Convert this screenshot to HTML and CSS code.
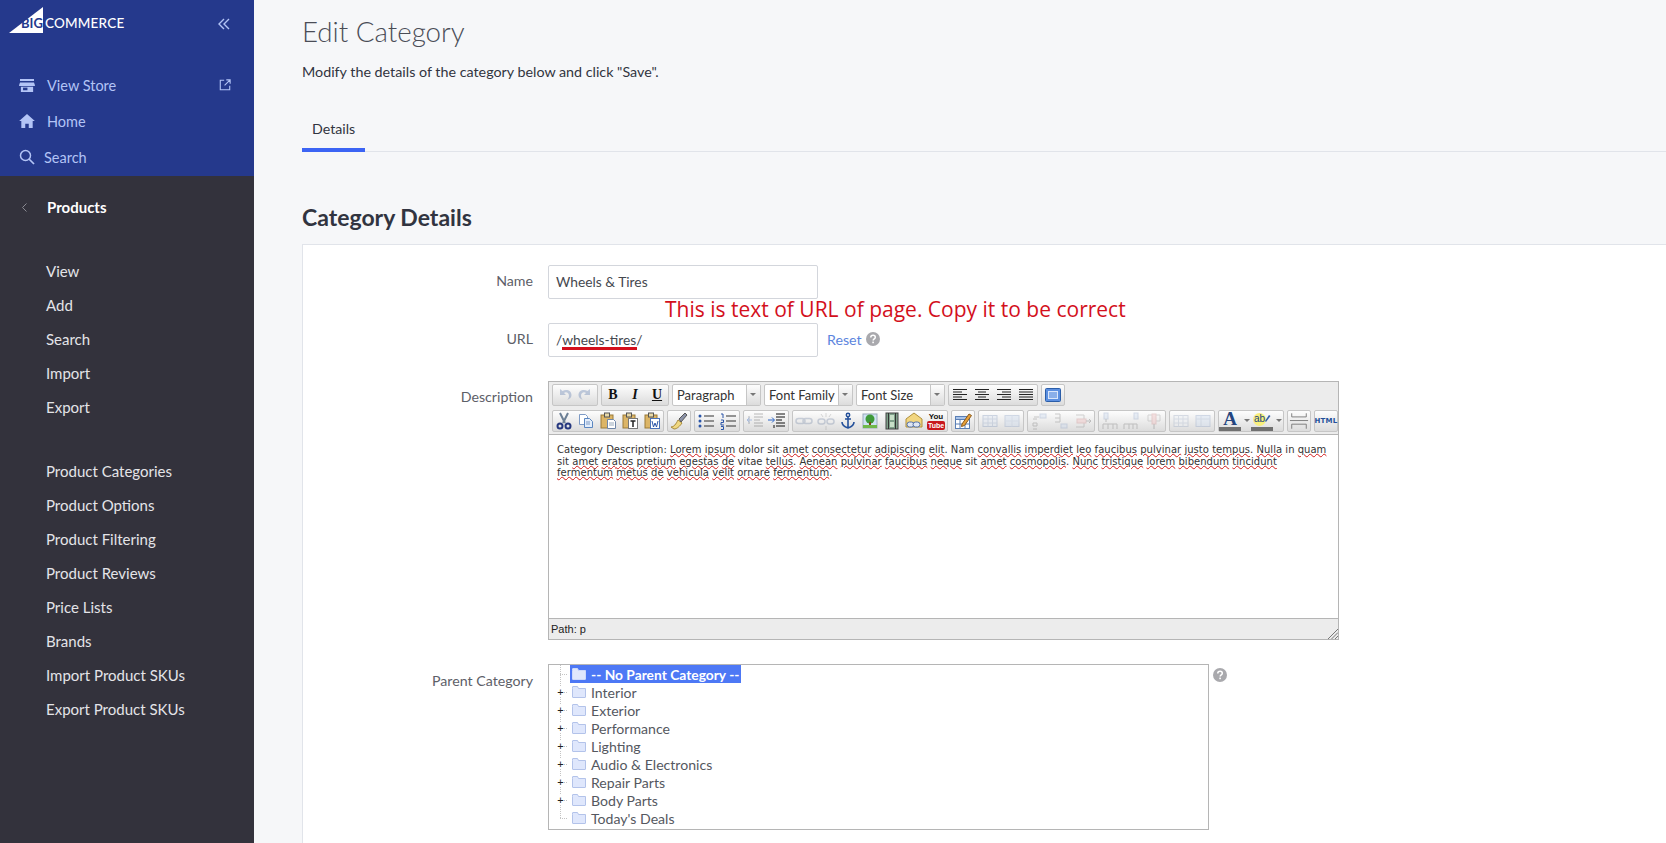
FILE: index.html
```html
<!DOCTYPE html>
<html lang="en">
  <head>
    <meta charset="UTF-8" />
    <title>Edit Category</title>
    <link rel="stylesheet" href="styles.css">
  </head>
  <body>
    <svg class="defs" width="0" height="0">
      <symbol id="help" viewBox="0 0 14 14"><circle cx="7" cy="7" r="7" fill="#a9a9ad"/><path d="M4.8 5.4c0-1.300 1-2.100 2.300-2.100s2.200.8 2.200 1.900c0 1.700-2.100 1.600-2.100 3.300" fill="none" stroke="#fff" stroke-width="1.500"/><rect x="6.300" y="9.600" width="1.600" height="1.600" fill="#fff"/></symbol>
      <symbol id="folder" viewBox="0 0 14 12"><path d="M.5 2.500v8.500a.5.500 0 0 0 .5.500h12a.5.500 0 0 0 .5-.500V2.500h-7l-1-2H1a.5.500 0 0 0-.5.500z" fill="#dfe7fc" stroke="#b3c3ea"/></symbol>
      <symbol id="folder-on" viewBox="0 0 14 12"><path d="M.5 2.500v8.500a.5.500 0 0 0 .5.500h12a.5.500 0 0 0 .5-.500V2.500h-7l-1-2H1a.5.500 0 0 0-.5.500z" fill="#dfe7fc" stroke="#cdd9fa"/></symbol>
      <symbol id="undo" viewBox="0 0 20 20"><path d="M6 4v6h6l-2-2c2-1.500 5-.5 5 3 0 1.500-.8 3-2 4 3-1 4.500-3 4.500-5 0-4.500-5-6.500-9-4z" fill="#5a78ad"/></symbol>
      <symbol id="redo" viewBox="0 0 20 20"><path d="M14 4v6H8l2-2c-2-1.500-5-.5-5 3 0 1.500.8 3 2 4-3-1-4.500-3-4.500-5 0-4.500 5-6.500 9-4z" fill="#5a78ad"/></symbol>
      <symbol id="justl" viewBox="0 0 20 20"><path d="M3 4.500h14M3 7h9M3 9.500h14M3 12h9M3 14.500h14" stroke="#222" fill="none"/></symbol>
      <symbol id="justc" viewBox="0 0 20 20"><path d="M3 4.500h14M6 7h8M3 9.500h14M6 12h8M3 14.500h14" stroke="#222" fill="none"/></symbol>
      <symbol id="justr" viewBox="0 0 20 20"><path d="M3 4.500h14M8 7h9M3 9.500h14M8 12h9M3 14.500h14" stroke="#222" fill="none"/></symbol>
      <symbol id="justf" viewBox="0 0 20 20"><path d="M3 4.500h14M3 7h14M3 9.500h14M3 12h14M3 14.500h14" stroke="#222" fill="none"/></symbol>
      <symbol id="full" viewBox="0 0 20 20"><rect x="2.500" y="3.500" width="15" height="13" rx="1" fill="#5b8fe0" stroke="#2a5da8"/><rect x="5" y="6" width="10" height="8" fill="#d9e6fb"/><path d="M6 8h8M6 10h8M6 12h8" stroke="#3b78d8"/></symbol>
      <symbol id="cut" viewBox="0 0 20 20"><path d="M6 2l5 10M14 2l-5 10" stroke="#6c7f95" stroke-width="2" fill="none"/><circle cx="6" cy="15" r="2.500" fill="none" stroke="#26387f" stroke-width="2"/><circle cx="14" cy="15" r="2.500" fill="none" stroke="#26387f" stroke-width="2"/></symbol>
      <symbol id="copy" viewBox="0 0 20 20"><path d="M3.500 3.500h6l2 2v8h-8z" fill="#fff" stroke="#7d9ac5"/><path d="M8.500 7.500h5l3 3v6h-8z" fill="#e4eefb" stroke="#5b86c0"/><path d="M10 11h4M10 13h4" stroke="#7d9ac5"/></symbol>
      <symbol id="paste" viewBox="0 0 20 20"><rect x="3" y="4" width="12" height="13" fill="#dcb566" stroke="#9a7a38"/><rect x="6.500" y="2" width="5" height="4" fill="#e8d9a8" stroke="#555"/><path d="M9.500 8.500h6l2 2v7h-8z" fill="#fff" stroke="#6e86a8"/><path d="M11 12h5M11 14h5" stroke="#9ab"/></symbol>
      <symbol id="pastet" viewBox="0 0 20 20"><rect x="3" y="4" width="12" height="13" fill="#dcb566" stroke="#9a7a38"/><rect x="6.500" y="2" width="5" height="4" fill="#e8d9a8" stroke="#555"/><rect x="8.500" y="7.500" width="9" height="10" fill="#fff" stroke="#777"/><path d="M10.500 10h5M13 10v6" stroke="#222" stroke-width="1.500"/></symbol>
      <symbol id="pastew" viewBox="0 0 20 20"><rect x="3" y="4" width="12" height="13" fill="#dcb566" stroke="#9a7a38"/><rect x="6.500" y="2" width="5" height="4" fill="#e8d9a8" stroke="#555"/><rect x="8.500" y="7.500" width="9" height="10" fill="#fff" stroke="#4a72b8"/><path d="M10 10l1.500 6 1.500-4 1.500 4 1.500-6" stroke="#2a55a8" fill="none"/></symbol>
      <symbol id="clean" viewBox="0 0 20 20"><path d="M2 16c3 0 5-3 7-7l4 3c-2 3-5 6-8 6z" fill="#f0d880" stroke="#a88a3a"/><path d="M10 8l6-6 2 2-6 7z" fill="#8c93a8" stroke="#555"/></symbol>
      <symbol id="bull" viewBox="0 0 20 20"><circle cx="4" cy="5" r="1.500" fill="#2a55a8"/><circle cx="4" cy="10" r="1.500" fill="#2a55a8"/><circle cx="4" cy="15" r="1.500" fill="#2a55a8"/><path d="M8 5h10M8 10h10M8 15h10" stroke="#333" fill="none"/></symbol>
      <symbol id="numl" viewBox="0 0 20 20"><path d="M3 3h2v4M3 9h2.500v2.500H3V14h3M3 15.500h2.500v3H3" stroke="#2a55a8" fill="none"/><path d="M8 5h10M8 10h10M8 15h10" stroke="#333" fill="none"/></symbol>
      <symbol id="outd" viewBox="0 0 20 20"><path d="M9 3h9M9 6h9M9 9h6M9 12h9M9 15h9M4 5v8" stroke="#444" fill="none"/><path d="M7 9H2M4.500 6.500L2 9l2.500 2.500" stroke="#2a65c8" fill="none"/></symbol>
      <symbol id="ind" viewBox="0 0 20 20"><path d="M9 3h9M9 6h9M9 9h6M9 12h9M9 15h9M7 17v-3" stroke="#111" fill="none"/><path d="M1 9h6M5 6.500L7.500 9 5 11.500" stroke="#2a65c8" fill="none"/></symbol>
      <symbol id="link" viewBox="0 0 20 20"><rect x="2" y="7.500" width="9" height="5" rx="2.500" fill="none" stroke="#7a8ba8" stroke-width="1.500"/><rect x="9" y="7.500" width="9" height="5" rx="2.500" fill="none" stroke="#7a8ba8" stroke-width="1.500"/></symbol>
      <symbol id="unlink" viewBox="0 0 20 20"><rect x="2" y="8" width="7" height="5" rx="2.500" fill="none" stroke="#7a8ba8" stroke-width="1.500"/><rect x="11" y="8" width="7" height="5" rx="2.500" fill="none" stroke="#7a8ba8" stroke-width="1.500"/><path d="M10 2v4M10 15v4M5 3l2 3M15 3l-2 3" stroke="#999" fill="none"/></symbol>
      <symbol id="anchor" viewBox="0 0 20 20"><circle cx="10" cy="4" r="1.700" fill="none" stroke="#24509a" stroke-width="1.500"/><path d="M10 6v11M7 8h6M4 11c0 3 3 5 6 6 3-1 6-3 6-6" fill="none" stroke="#24509a" stroke-width="1.600"/></symbol>
      <symbol id="image" viewBox="0 0 20 20"><rect x="3" y="3" width="14" height="14" fill="#cfe3f3" stroke="#9ab"/><circle cx="10" cy="8" r="4.500" fill="#3f9a3a"/><rect x="9" y="11" width="2" height="4" fill="#7a4a1c"/><path d="M3 14h14v3H3z" fill="#6fb84a"/></symbol>
      <symbol id="media" viewBox="0 0 20 20"><rect x="4" y="2" width="12" height="16" fill="#7fa08a" stroke="#444"/><path d="M6.500 2v16M13.500 2v16" stroke="#333" stroke-width="1"/><rect x="8" y="4" width="4" height="5" fill="#c8e0c8"/><rect x="8" y="11" width="4" height="5" fill="#c8e0c8"/></symbol>
      <symbol id="embed" viewBox="0 0 20 20"><path d="M2 8l8-6 8 6v8H2z" fill="#f2d680" stroke="#b08f3a"/><rect x="3" y="11" width="7" height="5" rx="2.500" fill="#dfe6f2" stroke="#5270a8"/><rect x="9" y="11" width="7" height="5" rx="2.500" fill="#dfe6f2" stroke="#5270a8"/></symbol>
      <symbol id="tabled" viewBox="0 0 20 20"><rect x="2.500" y="5.500" width="14" height="12" fill="#fff" stroke="#5a7fb5"/><rect x="2.500" y="5.500" width="14" height="3" fill="#a9c3e8" stroke="#5a7fb5"/><path d="M7 8.500v9M12 8.500v9M2.500 13h14" stroke="#5a7fb5"/><path d="M9 13L16 3l2.500 1.500-7 10-3 1z" fill="#e8a13a" stroke="#8a5a1c"/></symbol>
      <symbol id="row" viewBox="0 0 20 20"><rect x="3" y="4.500" width="14" height="11" fill="#dbe5f4" stroke="#7f96bc"/><path d="M3 8h14M3 12h14M8 4.500v11M12.500 4.500v11" stroke="#93a7c8"/></symbol>
      <symbol id="cell" viewBox="0 0 20 20"><rect x="3" y="4.500" width="14" height="11" fill="#c9d9f0" stroke="#8ba1c6"/><path d="M3 10h14M10 4.500v11" stroke="#a9bbd8"/></symbol>
      <symbol id="rowb" viewBox="0 0 20 20"><path d="M8 12h-4v3h4zM4 8h4M4 18h4" fill="none" stroke="#777"/><rect x="11" y="3" width="6" height="4" fill="#c9d9f0" stroke="#8ba1c6"/><path d="M5 6h5" stroke="#777"/></symbol>
      <symbol id="rowa" viewBox="0 0 20 20"><path d="M4 3h5v4H4M9 7v4H4" fill="none" stroke="#777"/><rect x="10" y="13" width="6" height="4" fill="#c9d9f0" stroke="#8ba1c6"/></symbol>
      <symbol id="rowd" viewBox="0 0 20 20"><path d="M3 4h8v12H3" fill="none" stroke="#888"/><rect x="4" y="8" width="9" height="4" fill="#f0b8b8" stroke="#c88"/><path d="M13 10h5M16 8l2 2-2 2" stroke="#666" fill="none"/></symbol>
      <symbol id="colb" viewBox="0 0 20 20"><path d="M3 18v-5h14v5M8 13v5M13 13v5" fill="none" stroke="#777"/><rect x="4" y="2" width="4" height="6" fill="#c9d9f0" stroke="#8ba1c6"/><path d="M6 8v3" stroke="#666"/></symbol>
      <symbol id="cola" viewBox="0 0 20 20"><path d="M2 18v-5h13v5M7 13v5M11 13v5" fill="none" stroke="#777"/><rect x="12" y="2" width="4" height="6" fill="#c9d9f0" stroke="#8ba1c6"/></symbol>
      <symbol id="cold" viewBox="0 0 20 20"><path d="M4 4h12v6H4z" fill="none" stroke="#999"/><rect x="8" y="3" width="4" height="10" fill="#f0b8b8" stroke="#c88"/><path d="M10 13v5" stroke="#666"/></symbol>
      <symbol id="split" viewBox="0 0 20 20"><rect x="3" y="4.500" width="14" height="11" fill="#eef2f8" stroke="#9aa9c2"/><path d="M3 8h14M3 12h14M7.500 4.500v11M12 4.500v11" stroke="#aab8cf"/></symbol>
      <symbol id="merge" viewBox="0 0 20 20"><rect x="3" y="4.500" width="14" height="11" fill="#cfdff5" stroke="#8ba1c6"/><path d="M3 8h14M8 4.500v11" stroke="#a0b4d2"/></symbol>
      <symbol id="hr" viewBox="0 0 22 22"><path d="M3 2.500v4h16v-4M3 19.500v-5h16v5M1 10.500h20" fill="none" stroke="#777"/></symbol>
      <symbol id="store" viewBox="0 0 18 16"><path d="M1 1h16v2.500H1zM1 5h16l1 3v1H0V8zM2 10h14v6H2z" fill="#b3c4f6"/><rect x="4.500" y="11" width="5" height="3" fill="#25398c"/></symbol>
      <symbol id="ext" viewBox="0 0 14 14"><path d="M6 1.500H1.500v11h11V8M8.500 1h4.500v4.500M13 1L6.500 7.500" fill="none" stroke="#b3c4f6" stroke-width="1.300"/></symbol>
      <symbol id="home" viewBox="0 0 18 16"><path d="M9 0L0 8h2.500v8h4.500v-5h4v5h4.500V8H18z" fill="#b3c4f6"/></symbol>
    </svg>

    <div class="page">
      <aside class="sidebar">
        <div class="sidebar-top">
          <div class="logo-row">
            <div class="logo">
              <svg class="logo-mark" width="34" height="26" viewBox="0 0 34 26"><path d="M0 26L34 0v26z" fill="#fff"/></svg>
              <span class="logo-big">BIG</span>
              <span class="logo-rest">COMMERCE</span>
            </div>
            <svg class="collapse" width="12" height="12" viewBox="0 0 12 12"><path d="M6 1L1 6l5 5M11 1L6 6l5 5" fill="none" stroke="#b3c4f6" stroke-width="1.400"/></svg>
          </div>
          <a class="top-link">
            <svg class="top-icon" width="16" height="14"><use href="#store"/></svg>
            <span>View Store</span>
            <svg class="top-ext" width="12" height="12"><use href="#ext"/></svg>
          </a>
          <a class="top-link">
            <svg class="top-icon" width="16" height="14"><use href="#home"/></svg>
            <span>Home</span>
          </a>
          <a class="top-link top-link-search">
            <svg class="search-icon" width="16" height="16" viewBox="0 0 16 16"><circle cx="6.500" cy="6.500" r="5" fill="none" stroke="#b3c4f6" stroke-width="1.500"/><path d="M10 10l5 5" stroke="#b3c4f6" stroke-width="1.700"/></svg>
            <span>Search</span>
          </a>
        </div>
        <div class="section-title">
          <svg width="5" height="9" viewBox="0 0 5 9"><path d="M4.500.5L.5 4.500l4 4" fill="none" stroke="#8a8a92"/></svg>
          <span>Products</span>
        </div>
        <nav class="side-list">
          <a>View</a>
          <a>Add</a>
          <a>Search</a>
          <a>Import</a>
          <a>Export</a>
        </nav>
        <nav class="side-list">
          <a>Product Categories</a>
          <a>Product Options</a>
          <a>Product Filtering</a>
          <a>Product Reviews</a>
          <a>Price Lists</a>
          <a>Brands</a>
          <a>Import Product SKUs</a>
          <a>Export Product SKUs</a>
        </nav>
      </aside>

      <main class="content">
        <h1>Edit Category</h1>
        <p class="intro">Modify the details of the category below and click "Save".</p>
        <div class="tabs"><a class="tab">Details</a></div>
        <h2>Category Details</h2>

        <section class="panel">
          <div class="form-row">
            <label>Name</label>
            <div class="field"><div class="input">Wheels &amp; Tires</div></div>
          </div>

          <div class="form-row">
            <label>URL</label>
            <div class="field">
              <div class="input">/wheels-tires/</div>
              <span class="note">This is text of URL of page. Copy it to be correct</span>
              <span class="note-line"></span>
              <a class="reset">Reset</a>
              <svg class="help help-url" width="14" height="14"><use href="#help"/></svg>
            </div>
          </div>

          <div class="form-row">
            <label class="label-tall">Description</label>
            <div class="editor">
              <div class="toolbar">
                <div class="tool-row">
                  <div class="group off">
                    <span class="btn"><svg><use href="#undo"/></svg></span>
                    <span class="btn"><svg><use href="#redo"/></svg></span>
                  </div>
                  <div class="group">
                    <span class="btn btn-b">B</span>
                    <span class="btn btn-i">I</span>
                    <span class="btn btn-u">U</span>
                  </div>
                  <div class="select"><span>Paragraph</span><i></i></div>
                  <div class="select"><span>Font Family</span><i></i></div>
                  <div class="select"><span>Font Size</span><i></i></div>
                  <div class="group">
                    <span class="btn"><svg><use href="#justl"/></svg></span>
                    <span class="btn"><svg><use href="#justc"/></svg></span>
                    <span class="btn"><svg><use href="#justr"/></svg></span>
                    <span class="btn"><svg><use href="#justf"/></svg></span>
                  </div>
                  <div class="group">
                    <span class="btn"><svg><use href="#full"/></svg></span>
                  </div>
                </div>
                <div class="tool-row">
                  <div class="group">
                    <span class="btn"><svg><use href="#cut"/></svg></span>
                    <span class="btn"><svg><use href="#copy"/></svg></span>
                    <span class="btn"><svg><use href="#paste"/></svg></span>
                    <span class="btn"><svg><use href="#pastet"/></svg></span>
                    <span class="btn"><svg><use href="#pastew"/></svg></span>
                  </div>
                  <div class="group">
                    <span class="btn"><svg><use href="#clean"/></svg></span>
                  </div>
                  <div class="group">
                    <span class="btn"><svg><use href="#bull"/></svg></span>
                    <span class="btn"><svg><use href="#numl"/></svg></span>
                  </div>
                  <div class="group">
                    <span class="btn off"><svg><use href="#outd"/></svg></span>
                    <span class="btn"><svg><use href="#ind"/></svg></span>
                  </div>
                  <div class="group">
                    <span class="btn off"><svg><use href="#link"/></svg></span>
                    <span class="btn off"><svg><use href="#unlink"/></svg></span>
                    <span class="btn"><svg><use href="#anchor"/></svg></span>
                    <span class="btn"><svg><use href="#image"/></svg></span>
                    <span class="btn"><svg><use href="#media"/></svg></span>
                    <span class="btn"><svg><use href="#embed"/></svg></span>
                    <span class="btn yt"><b>You</b><b class="yt-red">Tube</b></span>
                  </div>
                  <div class="group">
                    <span class="btn"><svg><use href="#tabled"/></svg></span>
                  </div>
                  <div class="group off">
                    <span class="btn"><svg><use href="#row"/></svg></span>
                    <span class="btn"><svg><use href="#cell"/></svg></span>
                  </div>
                  <div class="group off">
                    <span class="btn"><svg><use href="#rowb"/></svg></span>
                    <span class="btn"><svg><use href="#rowa"/></svg></span>
                    <span class="btn"><svg><use href="#rowd"/></svg></span>
                  </div>
                  <div class="group off">
                    <span class="btn"><svg><use href="#colb"/></svg></span>
                    <span class="btn"><svg><use href="#cola"/></svg></span>
                    <span class="btn"><svg><use href="#cold"/></svg></span>
                  </div>
                  <div class="group off">
                    <span class="btn"><svg><use href="#split"/></svg></span>
                    <span class="btn"><svg><use href="#merge"/></svg></span>
                  </div>
                  <div class="group">
                    <span class="btn btn-color">A</span>
                    <span class="arrow"></span>
                    <span class="btn btn-hl">
                      <span class="hl-ab">ab</span>
                      <svg viewBox="0 0 20 20"><path d="M13 10l4-6 1.500 1-4.500 6z" fill="#3460a8"/></svg>
                    </span>
                    <span class="arrow"></span>
                  </div>
                  <div class="group">
                    <span class="btn"><svg><use href="#hr"/></svg></span>
                  </div>
                  <div class="group">
                    <span class="btn btn-html">HTML</span>
                  </div>
                </div>
              </div>
              <div class="editor-body">
                Category Description: <u>Lorem</u> <u>ipsum</u> dolor sit <u>amet</u> <u>consectetur</u> <u>adipiscing</u> <u>elit</u>. Nam <u>convallis</u> <u>imperdiet</u> <u>leo</u> <u>faucibus</u> <u>pulvinar</u> <u>justo</u> <u>tempus</u>. <u>Nulla</u> in <u>quam</u> sit <u>amet</u> <u>eratos</u> <u>pretium</u> <u>egestas</u> <u>de</u> vitae <u>tellus</u>. <u>Aenean</u> <u>pulvinar</u> <u>faucibus</u> <u>neque</u> sit <u>amet</u> <u>cosmopolis</u>. <u>Nunc</u> <u>tristique</u> <u>lorem</u> <u>bibendum</u> <u>tincidunt</u> <u>fermentum</u> <u>metus</u> <u>de</u> <u>vehicula</u> <u>velit</u> <u>ornare</u> <u>fermentum</u>.
              </div>
              <div class="statusbar">
                <span>Path: p</span>
                <svg class="grip" width="10" height="10" viewBox="0 0 10 10"><path d="M10 0L0 10M10 3.500L3.500 10M10 7l-3 3" stroke="#777"/></svg>
              </div>
            </div>
          </div>

          <div class="form-row">
            <label class="label-tree">Parent Category</label>
            <div class="field field-tree">
              <ul class="tree">
                <li class="tree-item selected">
                  <i class="tree-toggle"></i>
                  <span class="tree-label"><svg width="14" height="12"><use href="#folder-on"/></svg><span>-- No Parent Category --</span></span>
                </li>
                <li class="tree-item">
                  <i class="tree-toggle">+</i>
                  <span class="tree-label"><svg width="14" height="12"><use href="#folder"/></svg><span>Interior</span></span>
                </li>
                <li class="tree-item">
                  <i class="tree-toggle">+</i>
                  <span class="tree-label"><svg width="14" height="12"><use href="#folder"/></svg><span>Exterior</span></span>
                </li>
                <li class="tree-item">
                  <i class="tree-toggle">+</i>
                  <span class="tree-label"><svg width="14" height="12"><use href="#folder"/></svg><span>Performance</span></span>
                </li>
                <li class="tree-item">
                  <i class="tree-toggle">+</i>
                  <span class="tree-label"><svg width="14" height="12"><use href="#folder"/></svg><span>Lighting</span></span>
                </li>
                <li class="tree-item">
                  <i class="tree-toggle">+</i>
                  <span class="tree-label"><svg width="14" height="12"><use href="#folder"/></svg><span>Audio &amp; Electronics</span></span>
                </li>
                <li class="tree-item">
                  <i class="tree-toggle">+</i>
                  <span class="tree-label"><svg width="14" height="12"><use href="#folder"/></svg><span>Repair Parts</span></span>
                </li>
                <li class="tree-item">
                  <i class="tree-toggle">+</i>
                  <span class="tree-label"><svg width="14" height="12"><use href="#folder"/></svg><span>Body Parts</span></span>
                </li>
                <li class="tree-item last">
                  <i class="tree-toggle"></i>
                  <span class="tree-label"><svg width="14" height="12"><use href="#folder"/></svg><span>Today's Deals</span></span>
                </li>
              </ul>
              <svg class="help help-tree" width="14" height="14"><use href="#help"/></svg>
            </div>
          </div>
        </section>
      </main>
    </div>
  </body>
</html>
```

FILE: styles.css
```css
html,
body {
  height: 100%;
  overflow: hidden;
}

body {
  margin: 0;
  background-color: #f6f7f9;
  color: #313440;
  font-family: "Lato", "Open Sans", sans-serif;
  font-size: 14.2px;
}

.defs {
  position: absolute;
}

.page {
  display: flex;
  height: 843px;
}

/* sidebar */

.sidebar {
  flex: 0 0 254px;
  background-color: #33323c;
  color: #e4e4e8;
  font-size: 15px;
}

.sidebar-top {
  height: 176px;
  background-color: #25398c;
  color: #b3c4f6;
  font-size: 14.500px;
}

.logo-row {
  display: flex;
  justify-content: space-between;
  align-items: center;
  height: 48px;
  margin-bottom: 19px;
  padding: 0 24px 0 9px;
}

.logo {
  position: relative;
  display: flex;
  align-items: flex-end;
  width: 120px;
  height: 26px;
  margin-top: -8px;
}

.logo-mark {
  display: block;
}

.logo-big {
  position: absolute;
  left: 12px;
  bottom: 2px;
  color: #25398c;
  font-size: 13px;
  font-weight: 700;
  line-height: 15px;
}

.logo-rest {
  position: absolute;
  left: 36px;
  bottom: 2px;
  color: #fff;
  font-size: 13.5px;
  font-weight: 500;
  line-height: 15px;
  letter-spacing: 0.2px;
}

.top-link {
  display: flex;
  align-items: center;
  height: 36px;
  padding-left: 19px;
}

.top-icon {
  margin-right: 12px;
}

.top-ext {
  margin-left: auto;
  margin-right: 23px;
}

.search-icon {
  margin-right: 9px;
}

.section-title {
  display: flex;
  align-items: center;
  height: 62px;
  padding-left: 22px;
  color: #fff;
  font-weight: 700;
}

.section-title span {
  margin-left: 20px;
}

.side-list {
  display: flex;
  flex-direction: column;
  margin-top: 16px;
  margin-bottom: 30px;
  padding-left: 46px;
}

.side-list + .side-list {
  margin-top: 0;
}

.side-list a {
  height: 34px;
  line-height: 34px;
}

/* main column */

.content {
  flex: 1;
  min-width: 0;
  padding-left: 48px;
}

h1 {
  margin: 13px 0 0;
  font-size: 27.7px;
  font-weight: 300;
  line-height: 38px;
  color: #4a4d57;
}

.intro {
  margin: 9px 0 0;
  font-size: 14.3px;
  line-height: 24px;
}

.tabs {
  height: 44px;
  margin-top: 23px;
  border-bottom: 1px solid #e1e4ea;
}

.tab {
  display: inline-block;
  height: 41px;
  padding: 0 10px;
  line-height: 44px;
  border-bottom: 4px solid #3c64f4;
}

h2 {
  margin: 49px 0 0;
  font-size: 23px;
  font-weight: 700;
  line-height: 33px;
  color: #313440;
}

.panel {
  display: flex;
  flex-direction: column;
  gap: 24px;
  margin-top: 10px;
  padding: 20px 0 40px;
  background-color: #fff;
  border: 1px solid #e1e4ea;
  border-right: 0;
}

.form-row {
  display: grid;
  grid-template-columns: 230px auto;
  column-gap: 15px;
}

label {
  text-align: right;
  color: #5d6068;
  line-height: 32px;
}

.field {
  position: relative;
  display: flex;
  align-items: center;
}

.input {
  box-sizing: border-box;
  width: 270px;
  height: 34px;
  padding-left: 7px;
  line-height: 32px;
  background-color: #fff;
  border: 1px solid #d3d6dc;
  border-radius: 2px;
  color: #45484f;
  font-size: 13.8px;
}

.note {
  position: absolute;
  left: 117px;
  top: -28px;
  color: #d3101c;
  font-family: "Open Sans", sans-serif;
  font-size: 21px;
  line-height: 28px;
  white-space: nowrap;
}

.note-line {
  position: absolute;
  left: 14px;
  top: 24px;
  width: 75px;
  height: 3px;
  background-color: #d3101c;
}

.reset {
  margin-left: 9px;
  margin-bottom: 2px;
  color: #5c85de;
}

.help {
  margin-left: 4px;
}

.help-url {
  margin-bottom: 2px;
}

/* editor */

.editor {
  box-sizing: border-box;
  display: flex;
  flex-direction: column;
  width: 791px;
  height: 259px;
  border: 1px solid #b5b5b5;
  background-color: #fff;
}

.toolbar {
  display: flex;
  flex-direction: column;
  gap: 4px;
  padding: 2px 0 2px 3px;
  background-color: #ececec;
  border-bottom: 1px solid #b5b5b5;
}

.tool-row {
  display: flex;
  gap: 3px;
  height: 22px;
}

.group,
.select {
  box-sizing: border-box;
  display: flex;
  height: 22px;
  background: linear-gradient(#fdfdfd, #dcdcdc);
  border: 1px solid #c6c6c6;
  border-radius: 2px;
}

.off svg {
  opacity: 0.35;
}

.btn {
  display: flex;
  justify-content: center;
  align-items: center;
  width: 22px;
  height: 20px;
  color: #111;
  font-family: "Liberation Serif", serif;
  font-size: 14px;
}

.btn svg {
  width: 20px;
  height: 20px;
}

.btn-b {
  font-weight: 700;
}

.btn-i {
  font-style: italic;
  font-weight: 700;
}

.btn-u {
  text-decoration: underline;
  font-weight: 700;
}

.btn-color {
  color: #24457f;
  font-size: 19px;
  font-weight: 700;
  line-height: 16px;
  height: 16px;
  border-bottom: 4px solid #707070;
}

.btn-hl {
  position: relative;
  box-sizing: border-box;
  height: 20px;
  border-bottom: 4px solid #707070;
}

.btn-hl svg {
  position: absolute;
  left: 1px;
  top: 0;
}

.hl-ab {
  display: block;
  width: 13px;
  height: 13px;
  margin-right: 5px;
  background-color: #f8ef7c;
  border-radius: 50%;
  color: #24457f;
  font-family: "Liberation Sans", sans-serif;
  font-size: 10px;
  line-height: 12px;
  text-align: center;
}

.btn-html {
  color: #24509a;
  font-family: "DejaVu Sans", sans-serif;
  font-size: 7px;
  font-weight: 700;
  letter-spacing: 0.3px;
}

.yt {
  flex-direction: column;
  font-family: "Liberation Sans", sans-serif;
  font-size: 8px;
  line-height: 9px;
}

.yt-red {
  padding: 0 1px;
  background-color: #c8171d;
  color: #fff;
  border-radius: 2px;
  font-size: 7px;
}

.arrow {
  position: relative;
  width: 10px;
}

.arrow::after,
.select i::after {
  content: "";
  position: absolute;
  left: 3px;
  top: 8px;
  border: 3px solid transparent;
  border-top-color: #777;
}

.select {
  justify-content: space-between;
  width: 89px;
  background: #fff;
}

.select span {
  padding-left: 4px;
  color: #333;
  font-family: "Lato", sans-serif;
  font-size: 13px;
  line-height: 20px;
}

.select i {
  position: relative;
  width: 13px;
  background: linear-gradient(#fdfdfd, #dcdcdc);
  border-left: 1px solid #c6c6c6;
}

.editor-body {
  flex: 1;
  padding: 9px 10px 0 8px;
  color: #333;
  font-family: "DejaVu Sans", sans-serif;
  font-size: 10px;
  line-height: 11.7px;
  letter-spacing: 0.03px;
}

.editor-body u {
  text-decoration: underline wavy #d01818 1px;
  text-underline-offset: 0;
}

.statusbar {
  display: flex;
  justify-content: space-between;
  align-items: flex-end;
  height: 20px;
  padding-left: 2px;
  background-color: #ececec;
  border-top: 1px solid #b5b5b5;
  color: #222;
  font-family: "Liberation Sans", sans-serif;
  font-size: 11px;
  line-height: 20px;
}

/* parent category tree */

.field-tree {
  align-items: flex-start;
}

.tree {
  box-sizing: border-box;
  width: 661px;
  height: 166px;
  margin: 0;
  padding: 0;
  list-style: none;
  background-color: #fff;
  border: 1px solid #b5b5b5;
}

.tree-item {
  position: relative;
  display: flex;
  align-items: center;
  height: 18px;
  padding-left: 21px;
  color: #55585f;
  font-size: 14.1px;
  background:
    repeating-linear-gradient(90deg, #c4c4c4 0 1px, transparent 1px 2px) 11px 50% / 8px 1px no-repeat,
    repeating-linear-gradient(#c4c4c4 0 1px, transparent 1px 2px) 11px 0 / 1px 100% no-repeat;
}

.tree-item.last {
  background-size: 8px 1px, 1px 50%;
}

.tree-toggle {
  position: absolute;
  left: 8px;
  top: 4px;
  width: 7px;
  height: 10px;
  color: #222;
  font-family: "Liberation Sans", sans-serif;
  font-size: 11px;
  font-style: normal;
  line-height: 10px;
  text-align: center;
}

.tree-item .tree-toggle:not(:empty) {
  background-color: #fff;
}

.tree-label {
  display: flex;
  align-items: center;
  gap: 5px;
  height: 18px;
  padding: 0 2px;
}

.tree-label svg {
  flex: none;
}

.selected .tree-label {
  background-color: #4d78f5;
  color: #fff;
  font-size: 13.8px;
  font-weight: 700;
}

.help-tree {
  margin: 4px 0 0 4px;
}

.label-tree {
  line-height: 34px;
}
```
